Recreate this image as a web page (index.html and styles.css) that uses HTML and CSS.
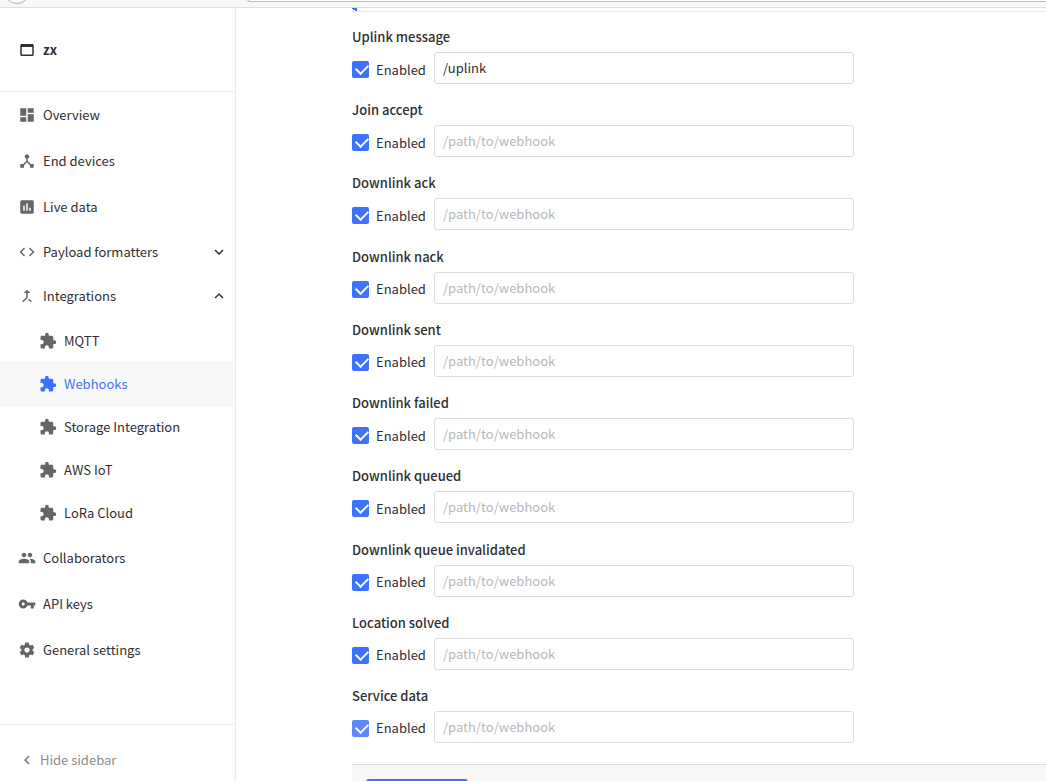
FILE: index.html
```html
<!DOCTYPE html>
<html lang="en">
    <head>
        <meta charset="utf-8">
        <title>Webhooks</title>
        <link rel="stylesheet" href="styles.css">
    </head>
    <body>
        <svg class="symbols">
            <symbol id="puzzle" viewBox="0 0 24 24">
                <path d="M20.5 11H19V7c0-1.100-.9-2-2-2h-4V3.500a2.500 2.500 0 0 0-5 0V5H4c-1.100 0-2 .9-2 2v3.800h1.500c1.500 0 2.700 1.200 2.700 2.700S5 16.200 3.500 16.200H2V20c0 1.100.9 2 2 2h3.800v-1.500c0-1.500 1.200-2.700 2.700-2.700s2.700 1.200 2.700 2.700V22H17c1.100 0 2-.9 2-2v-4h1.500a2.500 2.500 0 0 0 0-5z"/>
            </symbol>
        </svg>
        <div class="toolbar">
            <span class="back"></span>
            <span class="address"></span>
        </div>
        <div class="page">
            <aside class="sidebar">
                <a class="app" href="#">
                    <svg class="icon" viewBox="0 0 24 24"><path d="M19 4H5c-1.100 0-2 .9-2 2v12c0 1.100.9 2 2 2h14c1.100 0 2-.9 2-2V6c0-1.100-.9-2-2-2zm0 14H5V8h14v10z"/></svg>
                    zx
                </a>
                <ul class="nav">
                    <li><a href="#">
                        <svg class="icon" viewBox="0 0 24 24"><path d="M3 13h8V3H3v10zm0 8h8v-6H3v6zm10 0h8V11h-8v10zm0-18v6h8V3h-8z"/></svg>
                        Overview
                    </a></li>
                    <li><a href="#">
                        <svg class="icon" viewBox="0 0 24 24"><path d="M17 16l-4-4V8.820C14.160 8.400 15 7.300 15 6c0-1.660-1.340-3-3-3S9 4.340 9 6c0 1.300.84 2.400 2 2.820V12l-4 4H3v5h5v-3.050l4-4.200 4 4.200V21h5v-5h-4z"/></svg>
                        End devices
                    </a></li>
                    <li><a href="#">
                        <svg class="icon" viewBox="0 0 24 24"><path d="M19 3H5c-1.100 0-2 .9-2 2v14c0 1.100.9 2 2 2h14c1.100 0 2-.9 2-2V5c0-1.100-.9-2-2-2zM9 17H7v-7h2v7zm4 0h-2V7h2v10zm4 0h-2v-4h2v4z"/></svg>
                        Live data
                    </a></li>
                    <li><button type="button">
                        <svg class="icon" viewBox="0 0 24 24"><path d="M9.400 16.600L4.800 12l4.600-4.600L8 6l-6 6 6 6 1.400-1.400zm5.200 0l4.600-4.600-4.600-4.600L16 6l6 6-6 6-1.400-1.400z"/></svg>
                        Payload formatters
                        <svg class="arrow" viewBox="0 0 24 24"><path d="M16.590 8.590L12 13.170 7.410 8.590 6 10l6 6 6-6z"/></svg>
                    </button></li>
                    <li><button type="button">
                        <svg class="icon" viewBox="0 0 24 24"><path d="M17 20.410L18.410 19 15 15.590 13.590 17 17 20.410zM7.500 8H11v5.590L5.590 19 7 20.410l6-6V8h3.500L12 3.500 7.500 8z"/></svg>
                        Integrations
                        <svg class="arrow" viewBox="0 0 24 24"><path d="M12 8l-6 6 1.410 1.410L12 10.830l4.590 4.580L18 14z"/></svg>
                    </button>
                        <ul class="subnav">
                            <li><a href="#"><svg class="icon"><use href="#puzzle"/></svg>MQTT</a></li>
                            <li><a class="active" href="#"><svg class="icon"><use href="#puzzle"/></svg>Webhooks</a></li>
                            <li><a href="#"><svg class="icon"><use href="#puzzle"/></svg>Storage Integration</a></li>
                            <li><a href="#"><svg class="icon"><use href="#puzzle"/></svg>AWS IoT</a></li>
                            <li><a href="#"><svg class="icon"><use href="#puzzle"/></svg>LoRa Cloud</a></li>
                        </ul>
                    </li>
                    <li><a href="#">
                        <svg class="icon" viewBox="0 0 24 24"><path d="M16 11c1.660 0 2.990-1.340 2.990-3S17.660 5 16 5s-3 1.340-3 3 1.340 3 3 3zm-8 0c1.660 0 2.990-1.340 2.990-3S9.660 5 8 5 5 6.340 5 8s1.340 3 3 3zm0 2c-2.330 0-7 1.170-7 3.500V19h14v-2.500C15 14.170 10.330 13 8 13zm8 0c-.29 0-.62.020-.97.050C16.190 13.890 17 15.020 17 16.500V19h6v-2.500c0-2.330-4.670-3.500-7-3.500z"/></svg>
                        Collaborators
                    </a></li>
                    <li><a href="#">
                        <svg class="icon" viewBox="0 0 24 24"><path d="M12.650 10C11.830 7.670 9.610 6 7 6c-3.310 0-6 2.690-6 6s2.690 6 6 6c2.610 0 4.830-1.670 5.650-4H17v4h4v-4h2v-4H12.650zM7 14c-1.100 0-2-.9-2-2s.9-2 2-2 2 .9 2 2-.9 2-2 2z"/></svg>
                        API keys
                    </a></li>
                    <li><a href="#">
                        <svg class="icon" viewBox="0 0 24 24"><path d="M19.430 12.980c.04-.32.070-.64.070-.98s-.03-.66-.07-.98l2.110-1.650c.19-.15.24-.42.120-.64l-2-3.460c-.12-.22-.39-.3-.61-.22l-2.490 1c-.52-.4-1.080-.73-1.690-.98l-.38-2.650C14.460 2.180 14.250 2 14 2h-4c-.25 0-.46.18-.49.42l-.38 2.650c-.61.25-1.170.59-1.690.98l-2.490-1c-.23-.09-.49 0-.61.22l-2 3.460c-.13.22-.07.49.12.64l2.110 1.650c-.04.32-.07.65-.07.980s.03.66.07.98l-2.110 1.650c-.19.15-.24.42-.12.64l2 3.460c.12.22.39.3.61.22l2.490-1c.52.4 1.080.73 1.690.98l.38 2.650c.03.24.24.42.49.42h4c.25 0 .46-.18.49-.42l.38-2.650c.61-.25 1.170-.59 1.690-.98l2.490 1c.23.09.49 0 .61-.22l2-3.460c.12-.22.07-.49-.12-.64l-2.110-1.650zM12 15.500c-1.930 0-3.500-1.570-3.500-3.500s1.570-3.500 3.500-3.500 3.500 1.570 3.500 3.500-1.570 3.500-3.500 3.500z"/></svg>
                        General settings
                    </a></li>
                </ul>
                <button class="hide" type="button">
                    <svg class="arrow" viewBox="0 0 24 24"><path d="M15.410 7.410L14 6l-6 6 6 6 1.410-1.410L10.830 12z"/></svg>
                    Hide sidebar
                </button>
            </aside>
            <form class="content">
                <div class="notice"></div>
                <div class="fields">
                    <div class="field">
                        <label class="title" for="uplink">Uplink message</label>
                        <label class="check"><input type="checkbox" checked>Enabled</label>
                        <input class="path" id="uplink" type="text" value="/uplink" placeholder="/path/to/webhook">
                    </div>
                    <div class="field">
                        <label class="title" for="join">Join accept</label>
                        <label class="check"><input type="checkbox" checked>Enabled</label>
                        <input class="path" id="join" type="text" placeholder="/path/to/webhook">
                    </div>
                    <div class="field">
                        <label class="title" for="ack">Downlink ack</label>
                        <label class="check"><input type="checkbox" checked>Enabled</label>
                        <input class="path" id="ack" type="text" placeholder="/path/to/webhook">
                    </div>
                    <div class="field">
                        <label class="title" for="nack">Downlink nack</label>
                        <label class="check"><input type="checkbox" checked>Enabled</label>
                        <input class="path" id="nack" type="text" placeholder="/path/to/webhook">
                    </div>
                    <div class="field">
                        <label class="title" for="sent">Downlink sent</label>
                        <label class="check"><input type="checkbox" checked>Enabled</label>
                        <input class="path" id="sent" type="text" placeholder="/path/to/webhook">
                    </div>
                    <div class="field">
                        <label class="title" for="failed">Downlink failed</label>
                        <label class="check"><input type="checkbox" checked>Enabled</label>
                        <input class="path" id="failed" type="text" placeholder="/path/to/webhook">
                    </div>
                    <div class="field">
                        <label class="title" for="queued">Downlink queued</label>
                        <label class="check"><input type="checkbox" checked>Enabled</label>
                        <input class="path" id="queued" type="text" placeholder="/path/to/webhook">
                    </div>
                    <div class="field">
                        <label class="title" for="invalidated">Downlink queue invalidated</label>
                        <label class="check"><input type="checkbox" checked>Enabled</label>
                        <input class="path" id="invalidated" type="text" placeholder="/path/to/webhook">
                    </div>
                    <div class="field">
                        <label class="title" for="location">Location solved</label>
                        <label class="check"><input type="checkbox" checked>Enabled</label>
                        <input class="path" id="location" type="text" placeholder="/path/to/webhook">
                    </div>
                    <div class="field">
                        <label class="title" for="service">Service data</label>
                        <label class="check"><input class="light" type="checkbox" checked>Enabled</label>
                        <input class="path" id="service" type="text" placeholder="/path/to/webhook">
                    </div>
                </div>
                <div class="submit">
                    <button type="submit" aria-label="Save changes"></button>
                </div>
            </form>
        </div>
    </body>
</html>
```

FILE: styles.css
```css
*{
    box-sizing: border-box;
}
body{
    margin: 0;
    height: 100vh;
    display: flex;
    flex-direction: column;
    overflow: hidden;
    background: #fff;
    color: #2f2f33;
    font: 13px/20px "Noto Sans CJK SC", "Noto Sans", sans-serif;
}
a, button{
    color: inherit;
    font: inherit;
    text-decoration: none;
}
button{
    border: 0;
    padding: 0;
    background: none;
    text-align: left;
    cursor: pointer;
}
ul{
    margin: 0;
    padding: 0;
    list-style: none;
}
.symbols{
    display: none;
}
.toolbar{
    flex: none;
    display: flex;
    align-items: flex-end;
    height: 8px;
    padding-left: 4px;
    overflow: hidden;
    background: #f8f8f8;
    border-bottom: 1px solid #dedede;
}
.back{
    width: 26px;
    height: 26px;
    margin-bottom: 3px;
    border: 1px solid #b1b1b3;
    border-radius: 50%;
    background: #fcfcfc;
}
.address{
    flex: 1;
    height: 28px;
    margin-left: 217px;
    margin-bottom: 5px;
    border: 1px solid #b8bcb9;
    border-right: 0;
    border-radius: 3px 0 0 3px;
    background: #fff;
}
.page{
    flex: 1;
    min-height: 0;
    display: flex;
}

/* sidebar */
.sidebar{
    flex: none;
    width: 236px;
    display: flex;
    flex-direction: column;
    border-right: 1px solid #ebebeb;
}
.app{
    display: flex;
    align-items: center;
    height: 84px;
    padding-left: 18px;
    border-bottom: 1px solid #ebebeb;
    font-weight: bold;
}
.icon{
    flex: none;
    width: 18px;
    height: 18px;
    margin-right: 7px;
    fill: #666;
}
.app .icon{
    fill: #2f2f33;
}
.nav{
    flex: 1;
}
.nav a, .nav button{
    display: flex;
    align-items: center;
    width: 100%;
    height: 46px;
    padding-left: 18px;
}
.nav button{
    height: 44px;
    padding-right: 7px;
}
.arrow{
    flex: none;
    width: 18px;
    height: 18px;
    margin-left: auto;
    fill: #2f2f33;
}
.nav .subnav{
    padding-bottom: 2px;
}
.nav .subnav a{
    margin-bottom: -3px;
    padding-left: 39px;
}
.nav .subnav .active{
    background: #f8f8f8;
    color: #3d72ff;
}
.active .icon{
    fill: #3d72ff;
}
.hide{
    display: flex;
    align-items: center;
    padding: 25px 18px 11px;
    border-top: 1px solid #ebebeb;
    color: #8c8c8c;
}
.hide .arrow{
    margin: 0 4px 0 0;
    fill: #777;
}

/* webhook form */
.content{
    flex: 1;
    display: flex;
    flex-direction: column;
    padding-left: 116px;
}
.notice{
    flex: none;
    height: 4px;
    border-bottom: 1px solid #e8e8e8;
    background: linear-gradient(to top right, transparent 35%, #3d72ff 35%) left top / 5px 3px no-repeat;
}
.fields{
    flex: 1;
    display: flex;
    flex-direction: column;
    justify-content: space-between;
    padding: 15px 0 21px;
}
.field{
    display: grid;
    grid-template-columns: 82px minmax(0, 420px);
    row-gap: 5px;
    align-items: center;
}
.title{
    grid-column: 1 / 3;
    font-weight: 500;
}
.check{
    display: flex;
    align-items: center;
    padding-top: 3px;
}
.check input{
    appearance: none;
    width: 17px;
    height: 17px;
    margin: 0 7px 0 0;
    border-radius: 2px;
    background: #3d72ff;
}
.check input::before{
    content: "";
    display: block;
    width: 10px;
    height: 6px;
    margin: 3px 0 0 4px;
    border: solid #fff;
    border-width: 0 0 2px 2px;
    transform: rotate(-45deg);
}
.check .light{
    background: #5c88ff;
}
.path{
    width: 100%;
    height: 32px;
    padding: 0 8px 1px;
    border: 1px solid #dedede;
    border-radius: 3px;
    background: #fff;
    color: inherit;
    font: inherit;
}
.path::placeholder{
    color: #b8b8b8;
}
.submit{
    flex: none;
    height: 17px;
    padding: 14px 14px 0;
    overflow: hidden;
    border-top: 1px solid #dedede;
    background: #f8f8f8;
}
.submit button{
    width: 102px;
    height: 32px;
    border-radius: 3px;
    background: #3d72ff;
}
```
